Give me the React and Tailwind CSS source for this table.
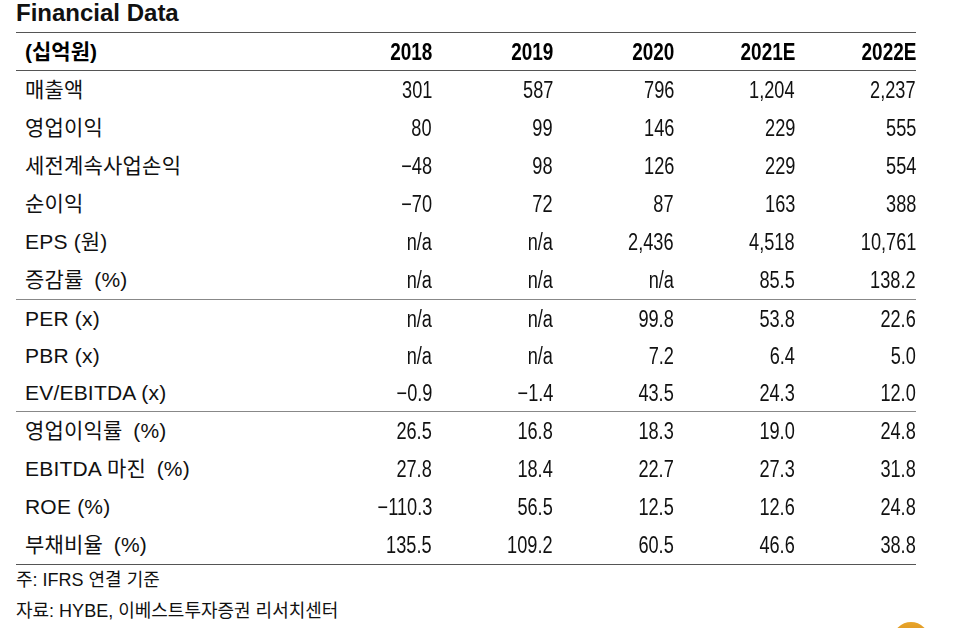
import React from "react";

const years = ["2018", "2019", "2020", "2021E", "2022E"];

const groups = [
  {
    h: "h-[38px]",
    rows: [
      ["매출액", "301", "587", "796", "1,204", "2,237"],
      ["영업이익", "80", "99", "146", "229", "555"],
      ["세전계속사업손익", "−48", "98", "126", "229", "554"],
      ["순이익", "−70", "72", "87", "163", "388"],
      ["EPS (원)", "n/a", "n/a", "2,436", "4,518", "10,761"],
      ["증감률\u2002(%)", "n/a", "n/a", "n/a", "85.5", "138.2"],
    ],
  },
  {
    h: "h-[37px]",
    rows: [
      ["PER (x)", "n/a", "n/a", "99.8", "53.8", "22.6"],
      ["PBR (x)", "n/a", "n/a", "7.2", "6.4", "5.0"],
      ["EV/EBITDA (x)", "−0.9", "−1.4", "43.5", "24.3", "12.0"],
    ],
  },
  {
    h: "h-[38px]",
    rows: [
      ["영업이익률\u2002(%)", "26.5", "16.8", "18.3", "19.0", "24.8"],
      ["EBITDA 마진\u2002(%)", "27.8", "18.4", "22.7", "27.3", "31.8"],
      ["ROE (%)", "−110.3", "56.5", "12.5", "12.6", "24.8"],
      ["부채비율\u2002(%)", "135.5", "109.2", "60.5", "46.6", "38.8"],
    ],
  },
];

const labelFont = { fontFamily: '"Liberation Sans", "Noto Sans CJK KR", sans-serif' };

function Row({ cells, h }) {
  return (
    <div className={`grid grid-cols-[295px_repeat(5,121px)] ${h} items-center`}>
      <div className="pl-[9px] text-[21px] tracking-[0.2px] text-[#111]" style={labelFont}>
        {cells[0]}
      </div>
      {cells.slice(1).map((v, i) => (
        <div key={i} className="text-right text-[23px] text-[#111] leading-none pt-[1px]" style={labelFont}>
          <span className="inline-block origin-right scale-x-[0.79]">{v}</span>
        </div>
      ))}
    </div>
  );
}

export default function App() {
  return (
    <div className="relative w-[960px] h-[628px] bg-white overflow-hidden">
      <div className="pl-[16px]">
        <h1 className="h-[32px] text-[24px] font-bold leading-[26px] text-[#111]" style={labelFont}>
          Financial Data
        </h1>
        <div className="w-[900px]">
          <div className="grid grid-cols-[295px_repeat(5,121px)] h-[39px] items-center border-y border-[#555]">
            <div className="pl-[9px] text-[21px] font-bold text-black" style={labelFont}>
              (십억원)
            </div>
            {years.map((y) => (
              <div key={y} className="text-right text-[24px] font-bold text-black leading-none" style={labelFont}>
                <span className="inline-block origin-right scale-x-[0.79]">{y}</span>
              </div>
            ))}
          </div>
          {groups.map((g, gi) => (
            <div key={gi} className={gi < groups.length - 1 ? "border-b border-[#888]" : "border-b border-[#555]"}>
              {g.rows.map((r) => (
                <Row key={r[0]} cells={r} h={g.h} />
              ))}
            </div>
          ))}
        </div>
        <div className="text-[18px] text-[#111] leading-[31px]" style={labelFont}>
          <div>주: IFRS 연결 기준</div>
          <div>자료: HYBE, 이베스트투자증권 리서치센터</div>
        </div>
      </div>
      <div className="absolute left-[893px] top-[622px] w-[36px] h-[36px] rounded-full bg-gradient-to-b from-[#e8a52a] to-[#c9780e] blur-[0.5px]" />
    </div>
  );
}
